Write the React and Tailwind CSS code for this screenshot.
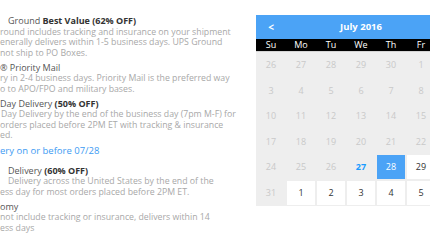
import React from "react";

const font = { fontFamily: '"Open Sans", "Liberation Sans", sans-serif' };

function Line({ children, className = "" }) {
  return <div className={"whitespace-nowrap h-[10.5px] leading-[10.5px] " + className}>{children}</div>;
}

const days = ["Su", "Mo", "Tu", "We", "Th", "Fr", "Sa"];
const cells = [
  [26, "p"], [27, "p"], [28, "p"], [29, "p"], [30, "p"], [1, "p"], [2, "p"],
  [3, "p"], [4, "p"], [5, "p"], [6, "p"], [7, "p"], [8, "p"], [9, "p"],
  [10, "p"], [11, "p"], [12, "p"], [13, "p"], [14, "p"], [15, "p"], [16, "p"],
  [17, "p"], [18, "p"], [19, "p"], [20, "p"], [21, "p"], [22, "p"], [23, "p"],
  [24, "p"], [25, "p"], [26, "p"], [27, "t"], [28, "s"], [29, "f"], [30, "f"],
  [31, "p"], [1, "f"], [2, "f"], [3, "f"], [4, "f"], [5, "f"], [6, "f"],
];

export default function App() {
  return (
    <div className="w-[430px] h-[242px] overflow-hidden bg-white" style={font}>
      <div className="flex pt-[15px] w-[520px]">
        <div className="w-[256px] shrink-0 text-[8.75px] text-[#a8a8a8] pt-[1px]">
          <div className="mb-[4.5px]">
            <Line className="pl-[8px] text-[9px] text-[#555]">Ground <b className="text-[#333]">Best Value (62% OFF)</b></Line>
            <Line>round includes tracking and insurance on your shipment</Line>
            <Line>enerally delivers within 1-5 business days. UPS Ground</Line>
            <Line>not ship to PO Boxes.</Line>
          </div>
          <div className="mb-[4.5px]">
            <Line className="text-[9px] text-[#555]">® Priority Mail</Line>
            <Line>ry in 2-4 business days. Priority Mail is the preferred way</Line>
            <Line>o to APO/FPO and military bases.</Line>
          </div>
          <div className="mb-[9.5px]">
            <Line className="text-[9px] text-[#555]">Day Delivery <b className="text-[#333]">(50% OFF)</b></Line>
            <Line className="pl-[1px]">Day Delivery by the end of the business day (7pm M-F) for</Line>
            <Line>orders placed before 2PM ET with tracking &amp; insurance</Line>
            <Line>ed.</Line>
            <Line className="mt-[5px] text-[#3d9bf3] text-[9.5px]">ery on or before 07/28</Line>
          </div>
          <div className="mb-[4.5px]">
            <Line className="pl-[8px] text-[9px] text-[#555]">Delivery <b className="text-[#333]">(60% OFF)</b></Line>
            <Line className="pl-[8px]">Delivery across the United States by the end of the</Line>
            <Line>ess day for most orders placed before 2PM ET.</Line>
          </div>
          <div>
            <Line className="text-[9px] text-[#555]">omy</Line>
            <Line>not include tracking or insurance, delivers within 14</Line>
            <Line>ess days</Line>
          </div>
        </div>
        <div className="w-[210px] shrink-0">
          <div className="h-[24px] bg-[#4ba3f6] text-white flex items-center">
            <div className="w-[30px] text-center text-[10px] font-bold">&lt;</div>
            <div className="flex-1 text-center text-[9.5px] font-bold">July 2016</div>
            <div className="w-[30px] text-center text-[10px] font-bold">&gt;</div>
          </div>
          <div className="h-[13px] bg-black text-white grid grid-cols-7 border-b border-[#d4d4d4] items-center">
            {days.map((d) => (
              <div key={d} className="text-center text-[9px] leading-[12px]">{d}</div>
            ))}
          </div>
          <div className="grid grid-cols-7 bg-[#eeeeee]">
            {cells.map(([n, k], i) => {
              let cls = "h-[25.6px] border border-[#eeeeee] flex items-center justify-center text-[9px] ";
              if (k === "p") cls += "text-[#c9c9c9]";
              else if (k === "t") cls += "text-[#1a9bff] font-bold";
              else if (k === "s") cls += "bg-[#4ba3f6] text-white";
              else cls += "bg-white text-[#333]";
              return (
                <div key={i} className={cls}>
                  {n}
                </div>
              );
            })}
          </div>
        </div>
      </div>
    </div>
  );
}
